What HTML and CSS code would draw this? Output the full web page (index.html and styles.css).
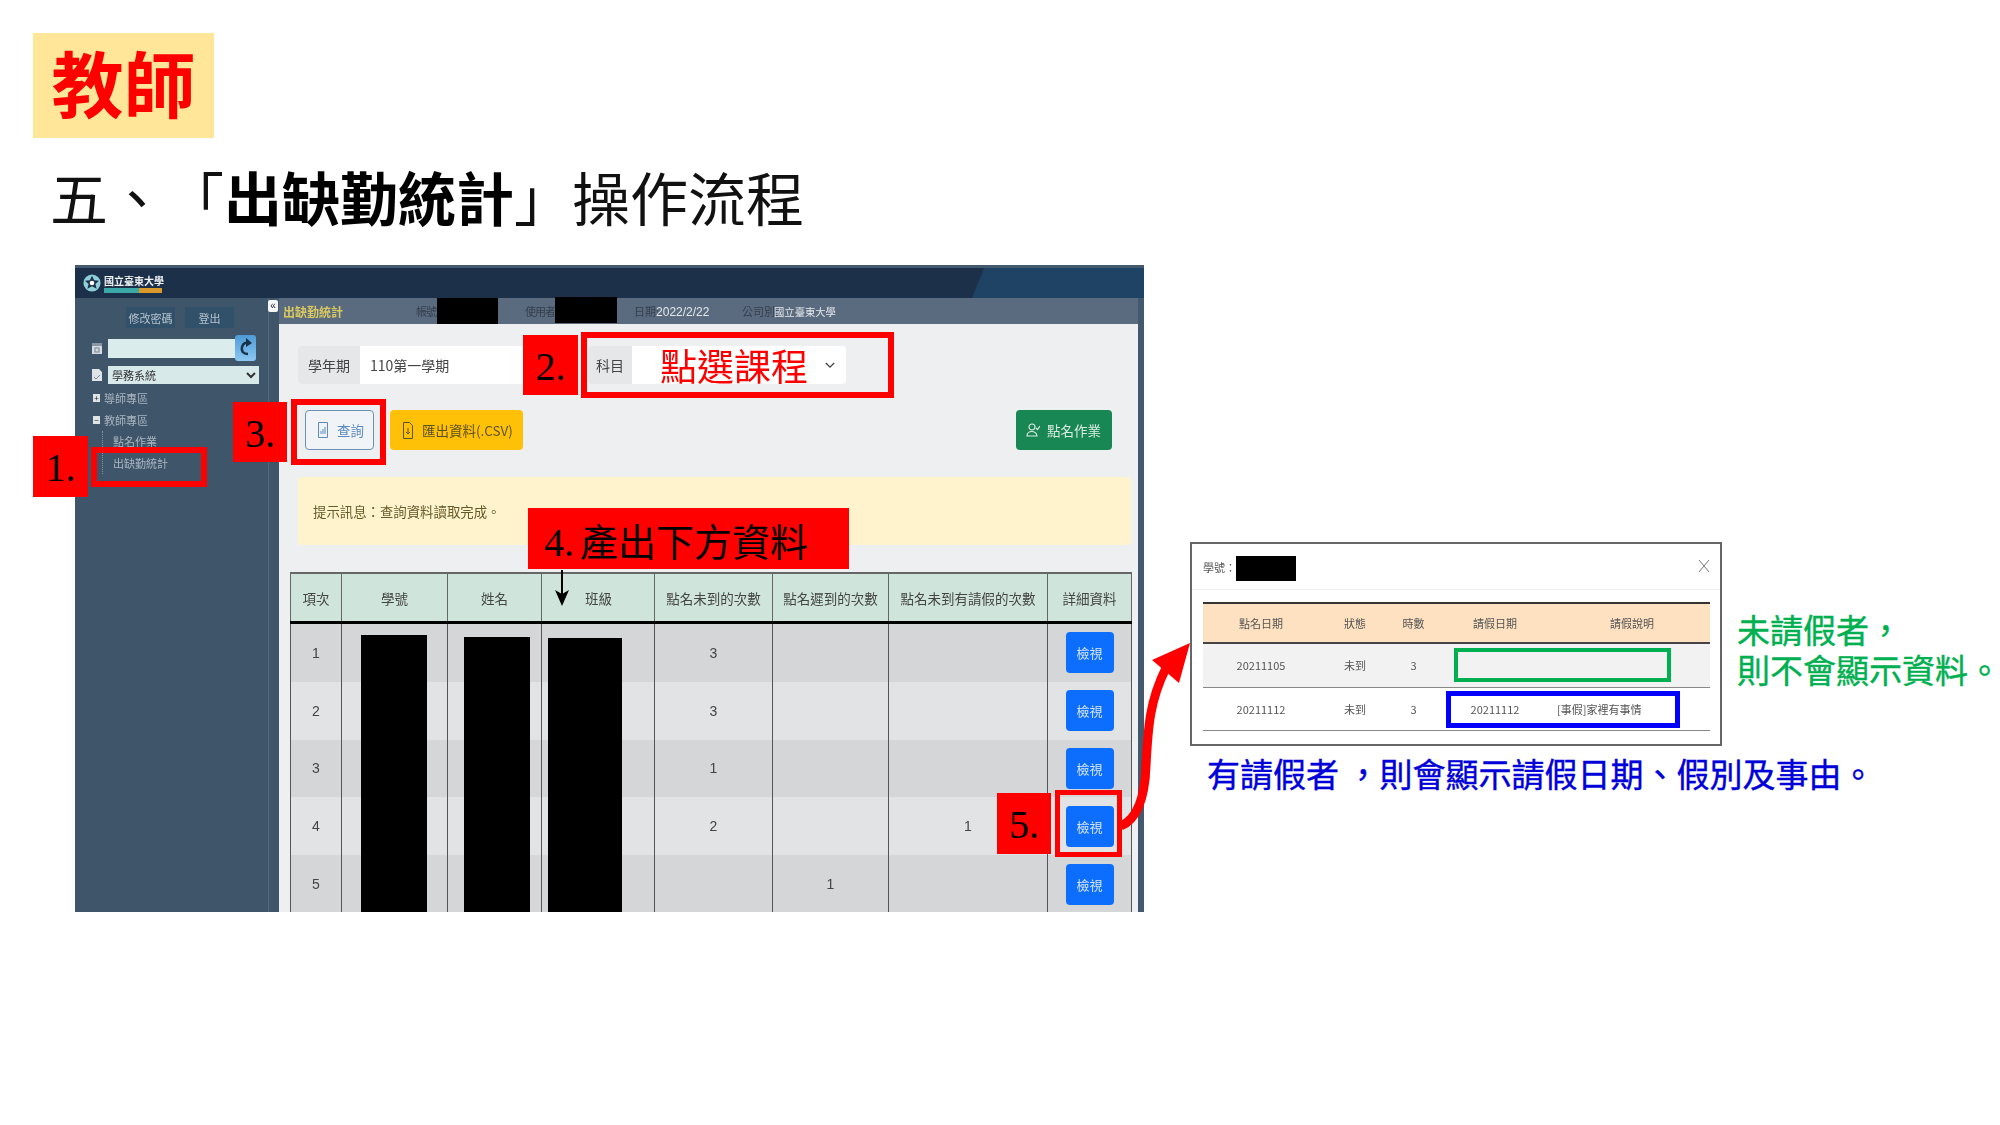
FILE: index.html
```html
<!DOCTYPE html>
<html lang="zh-Hant">
<head>
  <meta charset="UTF-8" />
  <title>教師 - 出缺勤統計操作流程</title>
  <link rel="stylesheet" href="styles.css">
</head>
<body>
<div class="slide">
  <div class="badge">教師</div>
  <h1 class="title">五、「<b>出缺勤統計</b>」操作流程</h1>

  <!-- 系統畫面 -->
  <div class="shot">
    <div class="shot-top">
      <svg class="logo-mark" viewBox="0 0 20 20" width="18" height="22">
        <circle cx="10" cy="10" r="9.5" fill="#8fd0d8"/>
        <path d="M10 2l2.4 5 5.4.4-4 3.6 1.3 5.4L10 13.6 4.900 16.400 6.200 11l-4-3.600L7.600 7z" fill="#1c3049"/>
        <circle cx="10" cy="10" r="2.600" fill="#fff"/>
      </svg>
      <div class="logo-text">
        <span class="logo-name">國立臺東大學</span>
        <span class="logo-band"></span>
      </div>
    </div>

    <aside class="sidebar">
      <button class="collapse">«</button>
      <div class="side-btns">
        <button class="side-btn">修改密碼</button>
        <button class="side-btn">登出</button>
      </div>
      <div class="tool-row">
        <svg class="tool-icon" viewBox="0 0 10 11" width="10" height="11"><rect width="10" height="11" fill="#d5dade"/><rect width="10" height="3" fill="#8a97a3"/><rect x="3" y="5" width="4" height="4" fill="none" stroke="#77838f"/></svg>
        <div class="tool-input"></div>
        <div class="refresh">
          <svg viewBox="0 0 20 26" width="20" height="26"><path d="M13 19c-5 0-7-3-6-7s4-5 7-4" fill="none" stroke="#17324a" stroke-width="2.500"/><path d="M11 3l6 5-6 4z" fill="#17324a"/></svg>
        </div>
      </div>
      <div class="tool-row tool-row-select">
        <svg class="tool-icon" viewBox="0 0 10 12" width="10" height="12"><path d="M0 0h7l3 3v9H0z" fill="#dfe4e8"/><path d="M2 8l2 2 4-4" fill="none" stroke="#7d8a95"/></svg>
        <select class="tool-select"><option>學務系統</option></select>
      </div>
      <ul class="tree">
        <li><span class="tree-box">+</span>導師專區</li>
        <li><span class="tree-box">−</span>教師專區</li>
        <li class="tree-sub">點名作業</li>
        <li class="tree-sub">出缺勤統計</li>
      </ul>
    </aside>

    <main class="main">
      <div class="subbar">
        <span class="sub-title">出缺勤統計</span>
        <span class="sub-account">帳號</span>
        <span class="redact-account"></span>
        <span class="sub-user">使用者</span>
        <span class="redact-user"></span>
        <span class="sub-date">日期:<em>2022/2/22</em></span>
        <span class="sub-company">公司別:<em>國立臺東大學</em></span>
      </div>
      <div class="content">
        <div class="form-row">
          <div class="group group-term">
            <span class="group-label">學年期</span>
            <span class="group-value">110第一學期</span>
          </div>
          <div class="group group-course">
            <span class="group-label group-label-sm">科目</span>
            <span class="group-value course-value">點選課程
              <svg class="chevron" viewBox="0 0 12 8" width="10" height="7"><path d="M1 1l5 5 5-5" fill="none" stroke="#444" stroke-width="1.600"/></svg>
            </span>
          </div>
        </div>

        <div class="btn-row">
          <button class="btn btn-query">
            <svg viewBox="0 0 10 16" width="10" height="16"><path d="M.5.5h9v15h-9z" fill="none" stroke="#5a8ac0"/><path d="M2.500 12V9h1v3zm2 0V7h1v5zm2 0V5h1v7z" fill="#5a8ac0"/></svg>
            查詢
          </button>
          <button class="btn btn-export">
            <svg viewBox="0 0 10 17" width="10" height="17"><path d="M.5.5h6l3 3v13h-9z" fill="none" stroke="#5c5220"/><path d="M5 6v6M3 10l2 2 2-2" fill="none" stroke="#5c5220"/></svg>
            匯出資料(.CSV)
          </button>
          <button class="btn btn-roll">
            <svg viewBox="0 0 14 14" width="14" height="14"><circle cx="6" cy="4" r="3" fill="none" stroke="#d9ebe2" stroke-width="1.200"/><path d="M1 13c0-6 9-6 10 0z" fill="none" stroke="#d9ebe2" stroke-width="1.200"/><path d="M10 5l1.500 1.500L14 3" fill="none" stroke="#d9ebe2" stroke-width="1.200"/></svg>
            點名作業
          </button>
        </div>

        <div class="alert">提示訊息：查詢資料讀取完成。</div>

        <table class="grid">
          <colgroup>
            <col class="c1"><col class="c2"><col class="c3"><col class="c4">
            <col class="c5"><col class="c6"><col class="c7"><col class="c8">
          </colgroup>
          <thead>
            <tr>
              <th>項次</th><th>學號</th><th>姓名</th><th class="th-class">班級</th>
              <th>點名未到的次數</th><th>點名遲到的次數</th><th>點名未到有請假的次數</th><th>詳細資料</th>
            </tr>
          </thead>
          <tbody>
            <tr><td>1</td><td></td><td></td><td></td><td>3</td><td></td><td></td><td><button class="view">檢視</button></td></tr>
            <tr><td>2</td><td></td><td></td><td></td><td>3</td><td></td><td></td><td><button class="view">檢視</button></td></tr>
            <tr><td>3</td><td></td><td></td><td></td><td>1</td><td></td><td></td><td><button class="view">檢視</button></td></tr>
            <tr><td>4</td><td></td><td></td><td></td><td>2</td><td></td><td>1</td><td><button class="view">檢視</button></td></tr>
            <tr><td>5</td><td></td><td></td><td></td><td></td><td>1</td><td></td><td><button class="view">檢視</button></td></tr>
          </tbody>
        </table>
      </div>
    </main>
  </div>

  <!-- 遮蔽個資 -->
  <div class="redact redact-id"></div>
  <div class="redact redact-name"></div>
  <div class="redact redact-class"></div>

  <!-- 步驟標示 -->
  <div class="tag tag-1">1.</div>
  <div class="frame frame-1"></div>
  <div class="tag tag-2">2.</div>
  <div class="frame frame-2"></div>
  <div class="tag tag-3">3.</div>
  <div class="frame frame-3"></div>
  <div class="tag tag-4">4. <span class="tag-cjk">產出下方資料</span></div>
  <div class="tag tag-5">5.</div>
  <div class="frame frame-5"></div>

  <svg class="arrow-down" viewBox="0 0 16 36" width="16" height="36">
    <path d="M8 0v26" stroke="#000" stroke-width="2"/>
    <path d="M1 20l7 4 7-4-7 16z" fill="#000"/>
  </svg>
  <svg class="arrow-red" viewBox="0 0 80 200" width="80" height="200">
    <path d="M6 191c18-8 24-32 25-60 2-40 4-66 20-98" fill="none" stroke="#f00" stroke-width="9"/>
    <path d="M75 8L37 25l27 23z" fill="#f00"/>
  </svg>

  <!-- 詳細資料視窗 -->
  <div class="modal">
    <div class="modal-head">
      <span class="modal-label">學號：</span>
      <span class="redact-modal"></span>
      <svg class="modal-close" viewBox="0 0 12 14" width="12" height="14"><path d="M1 1l10 12M11 1L1 13" stroke="#777" fill="none"/></svg>
    </div>
    <table class="detail">
      <colgroup>
        <col class="d1"><col class="d2"><col class="d3"><col class="d4"><col class="d5">
      </colgroup>
      <thead>
        <tr><th>點名日期</th><th>狀態</th><th>時數</th><th>請假日期</th><th>請假說明</th></tr>
      </thead>
      <tbody>
        <tr><td>20211105</td><td>未到</td><td>3</td><td></td><td></td></tr>
        <tr><td>20211112</td><td>未到</td><td>3</td><td>20211112</td><td class="reason">[事假]家裡有事情</td></tr>
      </tbody>
    </table>
  </div>
  <div class="mark mark-green"></div>
  <div class="mark mark-blue"></div>

  <p class="note note-green">未請假者，<br>則不會顯示資料。</p>
  <p class="note note-blue">有請假者 ，則會顯示請假日期、假別及事由。</p>
</div>
</body>
</html>
```

FILE: styles.css
```css
body {
  margin: 0;
  background-color: #fff;
  font-family: "Noto Sans CJK TC", "Liberation Sans", sans-serif;
  text-spacing-trim: space-all;
}
.slide {
  position: relative;
  width: 2000px;
  height: 1125px;
  overflow: hidden;
  padding-top: 33px;
  box-sizing: border-box;
}
.badge {
  width: 181px;
  height: 105px;
  margin-left: 33px;
  background-color: #ffe699;
  color: #f00;
  font-size: 72px;
  font-weight: 700;
  line-height: 95px;
  text-align: center;
}
.title {
  margin: 28px 0 39px 50px;
  font-size: 58px;
  font-weight: 400;
  line-height: 60px;
  color: #111;
}
.title b { font-weight: 700; color: #000; }

/* 系統畫面 */
.shot {
  display: grid;
  grid-template-columns: 204px 865px;
  grid-template-rows: 33px 614px;
  width: 1069px;
  height: 647px;
  margin-left: 75px;
  overflow: hidden;
  background-color: #43596e;
  filter: blur(0.45px);
}
.shot-top {
  grid-column: 1 / 3;
  display: flex;
  align-items: center;
  gap: 3px;
  padding: 0 0 0 8px;
  box-sizing: border-box;
  border-top: 3px solid #43596e;
  background: linear-gradient(112deg, #1c3049 0, #1c3049 84%, #1f4364 84.2%, #1f4364 100%);
}
.logo-text { display: flex; flex-direction: column; }
.logo-name {
  font-family: "Noto Sans CJK TC", sans-serif;
  font-size: 10px;
  font-weight: 700;
  line-height: 15px;
  color: #f2f4f6;
}
.logo-band {
  width: 58px;
  height: 5px;
  background: linear-gradient(90deg, #3aa9a8 0, #3aa9a8 60%, #d99a2b 60%, #d99a2b 100%);
}

.sidebar {
  position: relative;
  padding-top: 9px;
  box-sizing: border-box;
  background-color: #3f556a;
  background-image: linear-gradient(#566a7e, #566a7e);
  background-size: 1px 100%;
  background-position: 193px 0;
  background-repeat: no-repeat;
}
.collapse {
  position: absolute;
  left: 193px;
  top: 2px;
  width: 10px;
  height: 12px;
  padding: 0;
  border: none;
  border-radius: 2px;
  background-color: #f4f6f7;
  color: #223;
  font-size: 10px;
  line-height: 10px;
}
.side-btns { display: flex; gap: 10px; padding-left: 51px; }
.side-btn {
  width: 49px;
  height: 21px;
  padding: 0;
  border: none;
  background-color: #31506a;
  color: #b8c4ce;
  font-family: inherit;
  font-size: 11px;
  line-height: 20px;
}
.tool-row {
  display: flex;
  align-items: center;
  gap: 6px;
  height: 26px;
  margin-top: 7px;
  padding-left: 17px;
}
.tool-row-select { height: 18px; margin-top: 5px; }
.tool-icon { flex: none; }
.tool-input { width: 127px; height: 19px; background-color: #dbeced; }
.refresh {
  width: 21px;
  height: 26px;
  margin-left: -6px;
  border-radius: 3px;
  background: linear-gradient(#4d9ad6, #8cc8f2);
}
.tool-select {
  width: 151px;
  height: 18px;
  padding: 0;
  border: none;
  border-radius: 0;
  background-color: #d8e9ea;
  color: #333;
  font-family: inherit;
  font-size: 11px;
}
.tree {
  margin: 4px 0 0;
  padding: 0 0 0 18px;
  list-style: none;
  color: #aab6c1;
  font-size: 11px;
}
.tree li { height: 21.500px; line-height: 21px; white-space: nowrap; }
.tree-box {
  display: inline-block;
  width: 7px;
  height: 8px;
  margin-right: 4px;
  background-color: #dfe4e8;
  color: #222;
  font-size: 8px;
  line-height: 8px;
  text-align: center;
  vertical-align: 2px;
}
.tree .tree-sub {
  margin-left: 9px;
  padding-left: 10px;
  border-left: 1px dotted #8896a3;
}

.main { display: flex; flex-direction: column; width: 859px; }
.subbar {
  display: flex;
  flex: none;
  align-items: center;
  height: 26px;
  padding-left: 4px;
  background-color: #5b6b7f;
  color: #333f4e;
  font-size: 11px;
  white-space: nowrap;
}
.subbar em { font-style: normal; color: #e3e7ec; }
.sub-title { width: 61px; color: #d9c95f; font-size: 12px; font-weight: 700; }
.sub-account { width: 21px; margin-left: 72px; letter-spacing: -1px; }
.redact-account { width: 61px; height: 26px; background-color: #000; }
.sub-user { width: 30px; margin-left: 27px; letter-spacing: -1px; }
.redact-user { width: 62px; height: 26px; margin-top: -2px; background-color: #000; }
.sub-date { width: 73px; margin-left: 17px; }
.sub-date em { margin-left: -3px; font-family: "Liberation Sans", sans-serif; font-size: 12px; }
.sub-company { margin-left: 35px; }
.sub-company em { margin-left: -4px; font-size: 10.300px; }

.content {
  flex: 1;
  padding: 22px 7px 0 11px;
  background-color: #eeeff0;
  overflow: hidden;
}
.form-row { display: flex; gap: 10px; height: 38px; margin-left: 8px; }
.group {
  display: flex;
  align-items: stretch;
  color: #444;
  font-size: 14px;
  line-height: 38px;
}
.group-term { width: 280px; }
.group-course { width: 258px; }
.group-label { flex: none; width: 62px; border-radius: 4px 0 0 4px; background-color: #e5e7e9; text-align: center; }
.group-label-sm { width: 44px; }
.group-value { flex: 1; padding-left: 10px; border-radius: 0 4px 4px 0; background-color: #fff; }
.course-value { position: relative; padding-left: 28px; color: #f00; font-size: 37px; font-weight: 400; line-height: 38px; }
.chevron { position: absolute; right: 11px; top: 16px; }

.btn-row { display: flex; height: 40px; margin: 26px 19px 0 15px; }
.btn {
  display: flex;
  align-items: center;
  padding: 0;
  border: none;
  border-radius: 4px;
  font-family: inherit;
  font-size: 13.500px;
}
.btn-query {
  gap: 9px;
  width: 69px;
  padding-left: 12px;
  box-sizing: border-box;
  border: 1px solid #6d8fb8;
  background-color: #f1f4f7;
  color: #5a8ac0;
}
.btn-export {
  gap: 9px;
  width: 133px;
  margin-left: 16px;
  padding-left: 13px;
  box-sizing: border-box;
  background-color: #ffc107;
  color: #5c5220;
}
.btn-roll {
  gap: 7px;
  width: 96px;
  margin-left: auto;
  padding-left: 10px;
  box-sizing: border-box;
  background-color: #198754;
  color: #d9ebe2;
}
.alert {
  height: 68px;
  margin: 27px 0 0 8px;
  padding-left: 15px;
  border-radius: 4px;
  background-color: #fff3cd;
  color: #665a2a;
  font-size: 13.400px;
  line-height: 68px;
}

.grid {
  width: 841px;
  margin-top: 27px;
  border-collapse: collapse;
  table-layout: fixed;
  color: #444;
  font-size: 13.500px;
}
.c1 { width: 51px; }
.c2 { width: 106px; }
.c3 { width: 94px; }
.c4 { width: 113px; }
.c5 { width: 118px; }
.c6 { width: 116px; }
.c7 { width: 159px; }
.c8 { width: 84px; }
.grid th {
  height: 47px;
  padding: 0;
  border-top: 2px solid #666;
  border-right: 1px solid #666;
  border-left: 1px solid #666;
  border-bottom: 3px solid #000;
  background-color: #cfe5dc;
  font-weight: 400;
}
.grid .th-class { padding-left: 43px; text-align: left; }
.grid td {
  height: 57.800px;
  padding: 0;
  border-right: 1px solid #555;
  border-left: 1px solid #555;
  font-family: "Liberation Sans", sans-serif;
  font-size: 14px;
  text-align: center;
}
.grid tbody tr:nth-child(odd) { background-color: #d5d6d8; }
.grid tbody tr:nth-child(even) { background-color: #e2e3e5; }
.view {
  width: 48px;
  height: 41px;
  padding: 0;
  border: none;
  border-radius: 4px;
  background-color: #0d6efd;
  color: #d6e6ff;
  font-family: "Noto Sans CJK TC", sans-serif;
  font-size: 13px;
  vertical-align: middle;
}

/* 遮蔽 */
.redact { position: absolute; bottom: 213px; background-color: #000; }
.redact-id { left: 361px; top: 635px; width: 66px; }
.redact-name { left: 464px; top: 637px; width: 66px; }
.redact-class { left: 548px; top: 638px; width: 74px; }

/* 步驟標示 */
.tag {
  position: absolute;
  background-color: #f00;
  color: #000;
  font-family: "Liberation Serif", "Noto Sans CJK TC", serif;
  font-size: 40px;
  line-height: 64px;
  text-align: center;
}
.tag-1 { left: 33px; top: 436px; width: 55px; height: 61px; }
.tag-2 { left: 523px; top: 335px; width: 55px; height: 60px; }
.tag-3 { left: 233px; top: 402px; width: 54px; height: 60px; }
.tag-4 { left: 528px; top: 508px; width: 321px; height: 61px; padding-left: 16px; box-sizing: border-box; text-align: left; }
.tag-5 { left: 997px; top: 793px; width: 54px; height: 61px; }
.tag-cjk { margin-left: -4px; font-family: "Noto Sans CJK TC", sans-serif; font-size: 38px; }
.frame { position: absolute; box-sizing: border-box; border: 6px solid #f00; }
.frame-1 { left: 91px; top: 447px; width: 116px; height: 40px; }
.frame-2 { left: 581px; top: 332px; width: 313px; height: 66px; }
.frame-3 { left: 291px; top: 399px; width: 95px; height: 66px; }
.frame-5 { left: 1055px; top: 790px; width: 67px; height: 67px; border-width: 5px; }
.arrow-down { position: absolute; left: 554px; top: 570px; }
.arrow-red { position: absolute; left: 1115px; top: 635px; }

/* 詳細資料視窗 */
.modal {
  position: absolute;
  left: 1190px;
  top: 542px;
  width: 532px;
  height: 204px;
  box-sizing: border-box;
  border: 2px solid #666;
  background-color: #fff;
  filter: blur(0.4px);
}
.modal-head {
  position: relative;
  display: flex;
  align-items: center;
  height: 45px;
  padding-left: 11px;
  border-bottom: 1px solid #eee;
  color: #555;
  font-size: 11px;
}
.modal-label { width: 33px; }
.redact-modal { width: 60px; height: 25px; margin-top: 3px; background-color: #000; }
.modal-close { position: absolute; right: 10px; top: 15px; }
.detail {
  width: 507px;
  margin: 12px 0 0 11px;
  border-collapse: collapse;
  table-layout: fixed;
  color: #555;
  font-size: 11px;
  text-align: center;
}
.d1 { width: 116px; }
.d2 { width: 72px; }
.d3 { width: 45px; }
.d4 { width: 118px; }
.d5 { width: 156px; }
.detail th {
  height: 38px;
  padding: 0;
  border-top: 2px solid #333;
  border-bottom: 2px solid #444;
  background-color: #fde1c0;
  font-weight: 400;
}
.detail td {
  height: 42.500px;
  padding: 0;
  border-bottom: 1px solid #888;
}
.detail tbody tr:first-child { background-color: #f2f2f2; }
.detail .reason { padding-left: 3px; text-align: left; white-space: nowrap; }
.mark { position: absolute; box-sizing: border-box; }
.mark-green { left: 1454px; top: 648px; width: 217px; height: 34px; border: 4px solid #00b050; }
.mark-blue { left: 1446px; top: 691px; width: 234px; height: 37px; border: 5px solid #0000ff; }

.note { position: absolute; margin: 0; font-size: 33px; white-space: nowrap; -webkit-text-stroke: 0.4px currentColor; }
.note-green { left: 1737px; top: 609px; color: #00b050; line-height: 40px; }
.note-blue { left: 1207px; top: 751px; color: #0000d8; line-height: 44px; }
```
